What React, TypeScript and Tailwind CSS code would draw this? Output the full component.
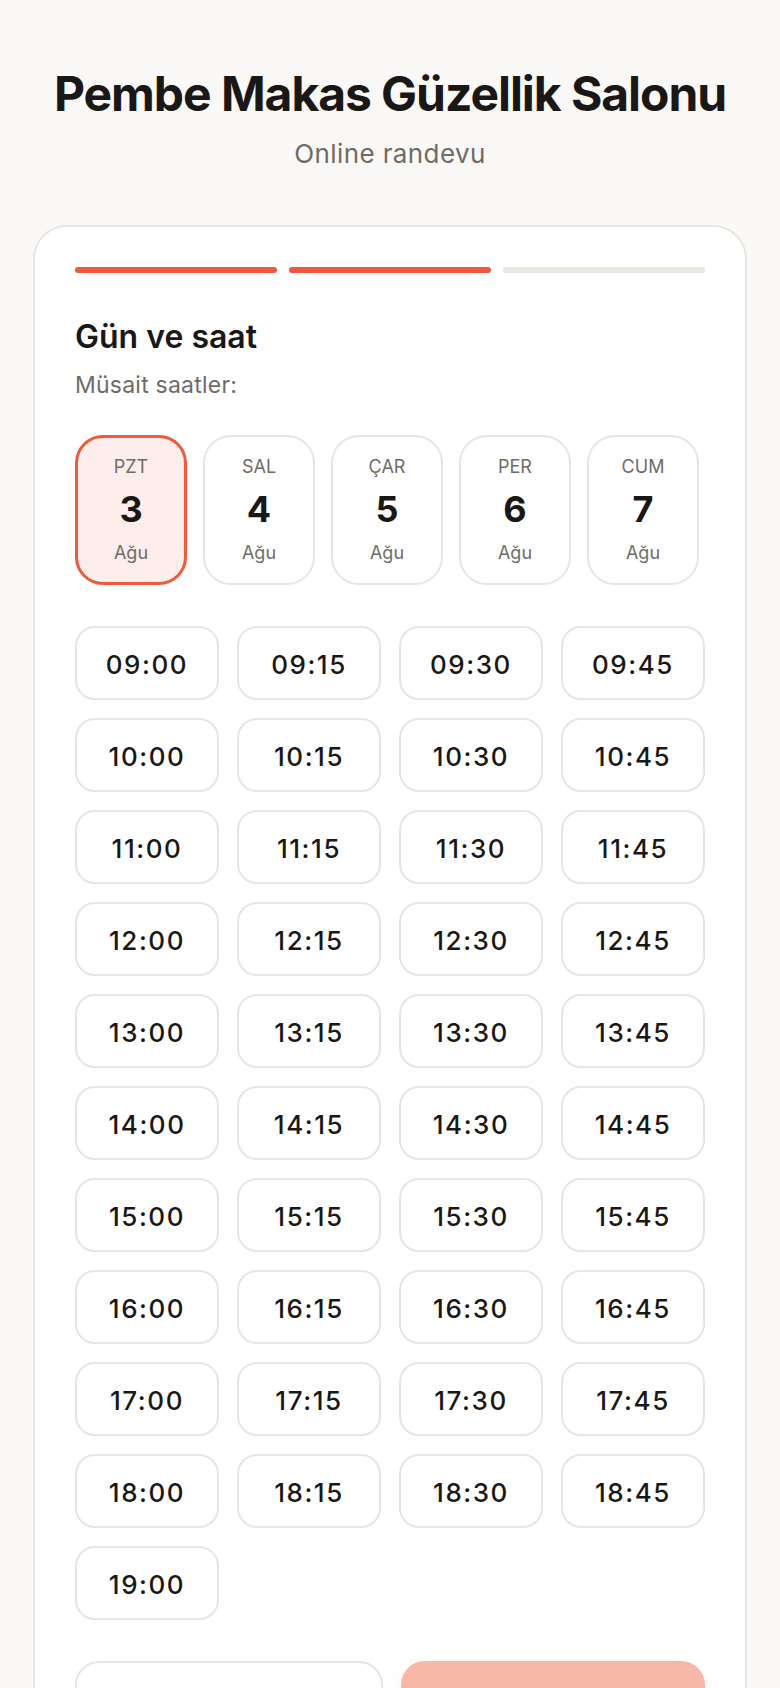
import React, { useState } from 'react';

const days = [
  { name: 'PZT', num: 3, month: 'Ağu' },
  { name: 'SAL', num: 4, month: 'Ağu' },
  { name: 'ÇAR', num: 5, month: 'Ağu' },
  { name: 'PER', num: 6, month: 'Ağu' },
  { name: 'CUM', num: 7, month: 'Ağu' },
];

const times: string[] = [];
for (let h = 9; h <= 19; h++) {
  for (const m of ['00', '15', '30', '45']) {
    if (h === 19 && m !== '00') continue;
    times.push(`${String(h).padStart(2, '0')}:${m}`);
  }
}

const App: React.FC = () => {
  const [day, setDay] = useState(0);
  const [time, setTime] = useState<string | null>(null);

  return (
    <div className="min-h-screen bg-[#faf9f7] [font-family:Inter,sans-serif] text-[#1a1816]">
      <div className="px-[33px] pt-[66px]">
        {/* Header */}
        <h1 className="text-center text-[48px] leading-[56px] font-bold tracking-[-0.022em]">
          Pembe Makas Güzellik Salonu
        </h1>
        <p className="mt-4 text-center text-[26px] leading-8 tracking-[0.015em] text-[#6f6b66]">Online randevu</p>

        {/* Card */}
        <div className="mt-[55px] rounded-[34px] border-2 border-[#e9e5df] bg-white p-10">
          {/* Steps */}
          <div className="flex gap-3">
            <div className="h-1.5 flex-1 rounded-full bg-[#ee5a3b]" />
            <div className="h-1.5 flex-1 rounded-full bg-[#ee5a3b]" />
            <div className="h-1.5 flex-1 rounded-full bg-[#e9e5df]" />
          </div>

          <h2 className="mt-[46px] text-[32px] leading-9 font-semibold">Gün ve saat</h2>
          <p className="mt-4 text-[23px] leading-7 tracking-[0.01em] text-[#6f6b66]">Müsait saatler:</p>

          {/* Days */}
          <div className="mt-9 flex gap-4">
            {days.map((d, i) => (
              <button
                key={d.name}
                onClick={() => setDay(i)}
                className={
                  i === day
                    ? 'flex h-[150px] w-[112px] flex-col items-center justify-center rounded-[28px] border-[3px] border-[#ee5a3b] bg-[#fdeeeb]'
                    : 'flex h-[150px] w-[112px] flex-col items-center justify-center rounded-[28px] border-2 border-[#e9e5df] bg-white'
                }
              >
                <span className="text-[18px] leading-6 text-[#6f6b66]">{d.name}</span>
                <span className="mt-[10px] text-[36px] leading-10 font-bold">{d.num}</span>
                <span className="mt-3 text-[18px] leading-6 text-[#6f6b66]">{d.month}</span>
              </button>
            ))}
          </div>

          {/* Times */}
          <div className="mt-[41px] grid grid-cols-4 gap-[18px]">
            {times.map((t) => (
              <button
                key={t}
                onClick={() => setTime(t)}
                className={
                  time === t
                    ? 'h-[74px] rounded-[20px] border-2 border-[#ee5a3b] bg-[#fdeeeb] pt-[3px] text-[26px] font-medium tracking-[0.06em]'
                    : 'h-[74px] rounded-[20px] border-2 border-[#e9e5df] bg-white pt-[3px] text-[26px] font-medium tracking-[0.06em]'
                }
              >
                {t}
              </button>
            ))}
          </div>

          {/* Actions */}
          <div className="mt-[41px] flex gap-[18px]">
            <button className="h-[72px] flex-1 rounded-[24px] border-2 border-[#e9e5df] bg-white text-[22px] font-medium">
              Geri
            </button>
            <button className="h-[72px] flex-1 rounded-[24px] bg-[#f7b8a8] text-[22px] font-semibold text-white shadow-[0_6px_20px_rgba(238,90,59,0.08)]">
              Devam et
            </button>
          </div>
        </div>
      </div>
    </div>
  );
};

export default App;
